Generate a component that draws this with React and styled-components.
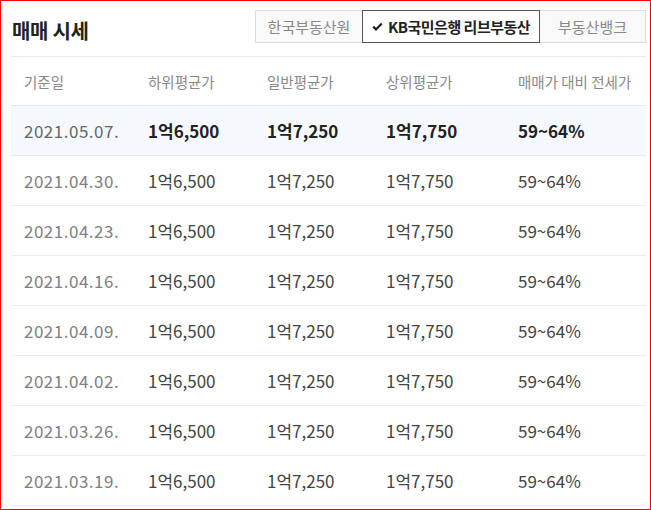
import React from "react";
import styled, { createGlobalStyle } from "styled-components";

const Global = createGlobalStyle`
  html, body { margin: 0; padding: 0; background: #fff; }
  body { font-family: "Noto Sans CJK KR", "Noto Sans", sans-serif; }
`;

const Frame = styled.div`
  box-sizing: border-box;
  width: 651px;
  height: 510px;
  border: 1px solid #f00;
  padding: 0 4px 0 10px;
  overflow: hidden;
`;

const Header = styled.div`
  display: flex;
  align-items: center;
  justify-content: space-between;
  height: 55px;
  border-bottom: 1px solid #e9e9e9;
`;

const Title = styled.h2`
  margin: 0 0 0 1px;
  font-size: 20px;
  font-weight: 700;
  color: #222;
  letter-spacing: -0.3px;
  padding-top: 4px;
`;

const Tabs = styled.div`
  display: flex;
  height: 33px;
  margin-bottom: 4px;
`;

const Tab = styled.button`
  display: flex;
  align-items: center;
  gap: 5px;
  box-sizing: border-box;
  height: 33px;
  width: ${(p) => p.$w}px;
  justify-content: ${(p) => (p.$active ? "flex-start" : "center")};
  padding: ${(p) => (p.$active ? "0 0 0 9px" : "0")};
  margin-left: ${(p) => (p.$first ? 0 : -1)}px;
  position: relative;
  z-index: ${(p) => (p.$active ? 1 : 0)};
  font-family: inherit;
  font-size: 15px;
  font-weight: ${(p) => (p.$active ? 700 : 400)};
  letter-spacing: ${(p) => (p.$active ? "-0.5px" : "0")};
  color: ${(p) => (p.$active ? "#222" : "#888")};
  background: ${(p) => (p.$active ? "#fff" : "#f9f9f9")};
  border: 1px solid ${(p) => (p.$active ? "#555" : "#dcdcdc")};
  white-space: nowrap;
  cursor: pointer;
`;

const Table = styled.div`
  display: flex;
  flex-direction: column;
`;

const Row = styled.div`
  display: grid;
  grid-template-columns: 124px 119px 119px 132px 1fr;
  align-items: center;
  height: ${(p) => (p.$head ? 48 : 49)}px;
  padding-left: 13px;
  border-bottom: 1px solid ${(p) => (p.$hl ? "#e1eaf6" : "#ececec")};
  border-top: ${(p) => (p.$hl ? "1px solid #e1eaf6" : "none")};
  margin-top: ${(p) => (p.$hl ? -1 : 0)}px;
  background: ${(p) => (p.$hl ? "#f5f9fe" : "#fff")};
`;

const HeadCell = styled.div`
  font-size: 14.5px;
  color: #888;
`;

const Cell = styled.div`
  font-size: 17px;
  letter-spacing: ${(p) => (p.$date ? "0.5px" : "0")};
  color: ${(p) => (p.$date ? (p.$hl ? "#666" : "#808080") : p.$hl ? "#222" : "#444")};
  font-weight: ${(p) => (p.$hl && !p.$date ? 700 : 400)};
`;

const rows = [
  "2021.05.07.",
  "2021.04.30.",
  "2021.04.23.",
  "2021.04.16.",
  "2021.04.09.",
  "2021.04.02.",
  "2021.03.26.",
  "2021.03.19.",
];

const Check = () => (
  <svg width="11" height="9" viewBox="0 0 11 9">
    <polyline points="1.2,4.6 4,7.4 9.8,1.4" fill="none" stroke="#222" strokeWidth="2.2" />
  </svg>
);

export default function App() {
  return (
    <>
      <Global />
      <Frame>
        <Header>
          <Title>매매 시세</Title>
          <Tabs>
            <Tab $first $w={108}>한국부동산원</Tab>
            <Tab $active $w={178}>
              <Check />
              KB국민은행 리브부동산
            </Tab>
            <Tab $w={107}>부동산뱅크</Tab>
          </Tabs>
        </Header>
        <Table>
          <Row $head>
            <HeadCell>기준일</HeadCell>
            <HeadCell>하위평균가</HeadCell>
            <HeadCell>일반평균가</HeadCell>
            <HeadCell>상위평균가</HeadCell>
            <HeadCell>매매가 대비 전세가</HeadCell>
          </Row>
          {rows.map((d, i) => (
            <Row key={d} $hl={i === 0}>
              <Cell $date $hl={i === 0}>{d}</Cell>
              <Cell $hl={i === 0}>1억6,500</Cell>
              <Cell $hl={i === 0}>1억7,250</Cell>
              <Cell $hl={i === 0}>1억7,750</Cell>
              <Cell $hl={i === 0}>59~64%</Cell>
            </Row>
          ))}
        </Table>
      </Frame>
    </>
  );
}
